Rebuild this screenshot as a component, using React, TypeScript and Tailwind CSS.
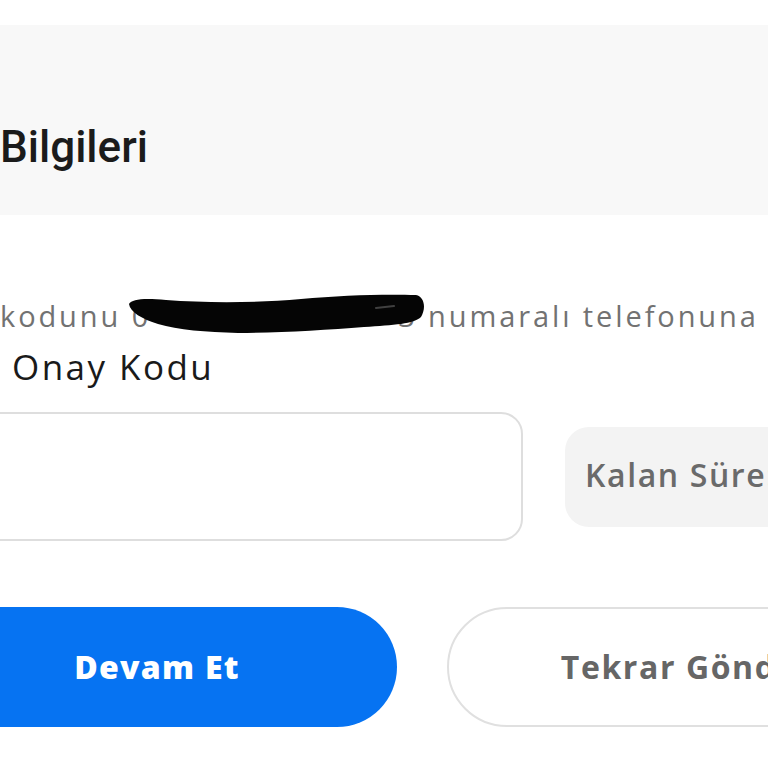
import React from "react";

function Redacted() {
  return (
    <span className="relative inline-block w-[286px]">
      <span>0</span>
      <span className="absolute right-[0px] top-0">3</span>
      <svg
        className="absolute left-[-6px] top-[-8px]"
        width="300"
        height="45"
        viewBox="0 0 300 45"
      >
        <path
          d="M3,11 C6,6 18,5 40,7 C80,10 130,10 175,6 C215,2 260,1 290,2 C299,4 300,16 295,24 C288,31 268,32 238,34 C200,37 150,40 112,40 C80,39 52,37 32,31 C16,26 4,19 3,11 Z"
          fill="#050505"
        />
        <path d="M250,15 L268,13" stroke="#5a5a5a" strokeWidth="2" strokeLinecap="round" opacity="0.7" />
      </svg>
    </span>
  );
}

export default function App() {
  return (
    <div className="w-[768px] h-[768px] overflow-hidden bg-white">
      <div className="mt-[25px] h-[190px] bg-[#f8f8f8] pt-[100px]">
        <h1 className="font-['Roboto',sans-serif] font-medium text-[44px] leading-[44px] text-[#1b1b1b] whitespace-nowrap">
          Bilgileri
        </h1>
      </div>

      <p className="mt-[86px] whitespace-nowrap font-['Open_Sans',sans-serif] font-medium text-[29px] leading-[29px] tracking-[0.1em] text-[#727272]">
        kodunu <Redacted /> numaralı telefonuna
      </p>

      <p className="mt-[19px] pl-[12px] whitespace-nowrap font-['Open_Sans',sans-serif] font-medium text-[35px] leading-[35px] tracking-[0.07em] text-[#1a1a1a]">
        Onay Kodu
      </p>

      <div className="mt-[28px] -ml-[83px] flex items-center gap-[42px]">
        <div className="w-[606px] h-[129px] shrink-0 rounded-[22px] border-2 border-[#dedede] bg-white" />
        <div className="w-[320px] h-[100px] shrink-0 rounded-[24px] bg-[#f3f3f3] flex items-center pl-[20px] pb-[4px]">
          <span className="whitespace-nowrap font-['Open_Sans',sans-serif] font-semibold text-[32px] tracking-[0.05em] text-[#6a6a6a]">
            Kalan Süre: 02:59
          </span>
        </div>
      </div>

      <div className="mt-[66px] -ml-[83px] flex gap-[50px]">
        <button className="w-[480px] h-[120px] shrink-0 rounded-full bg-[#0673f2] flex items-center justify-center">
          <span className="whitespace-nowrap font-['Open_Sans',sans-serif] font-extrabold text-[32px] tracking-[0.04em] text-white">
            Devam Et
          </span>
        </button>
        <button className="w-[480px] h-[120px] shrink-0 rounded-full border-2 border-[#e0e0e0] bg-white flex items-center justify-center">
          <span className="whitespace-nowrap font-['Open_Sans',sans-serif] font-bold text-[32px] tracking-[0.05em] text-[#666666]">
            Tekrar Gönder
          </span>
        </button>
      </div>
    </div>
  );
}
